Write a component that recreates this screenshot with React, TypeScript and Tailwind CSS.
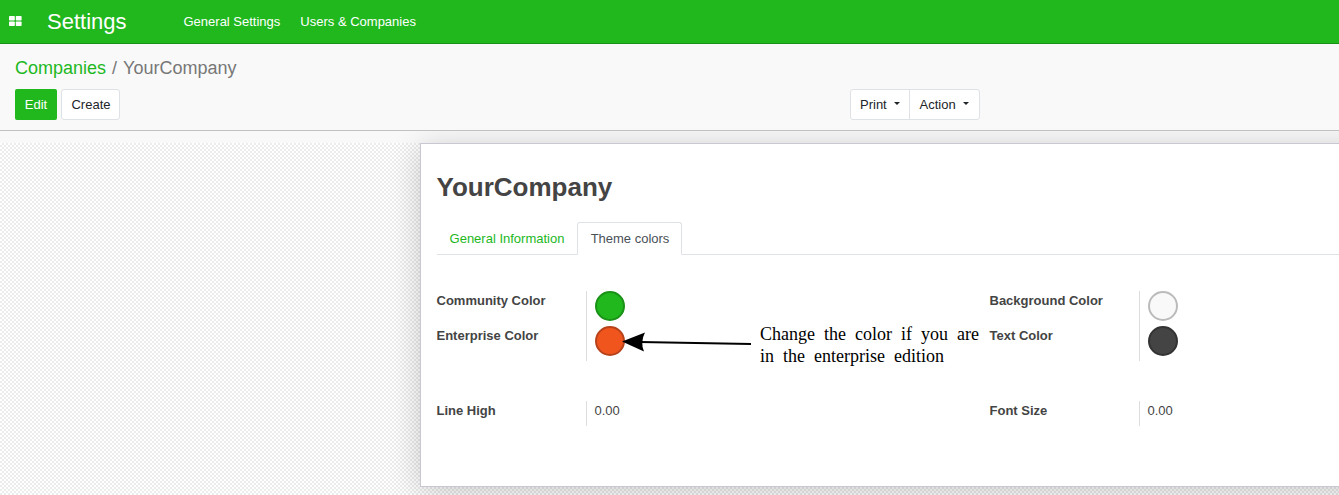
import React from "react";

const checker =
  "bg-[conic-gradient(#ececec_25%,#ffffff_0_50%,#ececec_0_75%,#ffffff_0)] bg-[length:4px_4px]";

function Caret() {
  return (
    <svg className="mt-[-2px] ml-[7px]" width="6" height="3" viewBox="0 0 6 3">
      <path d="M0 0H6L3 3Z" fill="#212529" />
    </svg>
  );
}

function Swatch({ color }: { color: string }) {
  return <span className={`block h-[30px] w-[30px] rounded-full border-2 ${color}`} />;
}

function Field({ label, children }: { label: string; children: React.ReactNode }) {
  return (
    <div className="flex h-[35px]">
      <div className="w-[149.5px] shrink-0 pt-[2px] font-bold leading-[15px]">{label}</div>
      <div className="h-[35px] border-l border-[#dddddd] pl-2">{children}</div>
    </div>
  );
}

function NumberField({ label }: { label: string }) {
  return (
    <div className="flex h-[25px]">
      <div className="w-[149.5px] shrink-0 pt-[2px] font-bold leading-[15px]">{label}</div>
      <div className="border-l border-[#dddddd] pt-[2px] pl-[7.5px] leading-[15px]">0.00</div>
    </div>
  );
}

export default function App() {
  return (
    <div className="relative flex h-[495px] w-[1339px] flex-col overflow-hidden bg-[#f9f9f9] font-['Liberation_Sans',Arial,sans-serif] text-[13px] text-[#444444]">
      <nav className="flex h-11 shrink-0 items-center border-b border-[#1a9117] bg-[#21b81e] text-white">
        <svg className="mt-[-2px] ml-[9px] shrink-0" width="13" height="10" viewBox="0 0 13 10" fill="currentColor">
          <rect x="0" y="0" width="5.8" height="4.5" rx="0.7" />
          <rect x="6.8" y="0" width="5.8" height="4.5" rx="0.7" />
          <rect x="0" y="5.5" width="5.8" height="4.5" rx="0.7" />
          <rect x="6.8" y="5.5" width="5.8" height="4.5" rx="0.7" />
        </svg>
        <span className="ml-[25px] w-[136.5px] text-[22px]">Settings</span>
        <span>General Settings</span>
        <span className="ml-5">Users &amp; Companies</span>
      </nav>

      <header className="h-[87px] shrink-0 border-b border-[#c1c1c1] px-[15px] pt-[11px]">
        <div className="flex h-[27px] items-center text-[18px]">
          <span className="text-[#21b81e]">Companies</span>
          <span className="px-[6px] text-[#777777]">/</span>
          <span className="text-[#777777]">YourCompany</span>
        </div>
        <div className="mt-[7px] flex text-[#212529]">
          <button className="h-[31px] w-[42px] rounded-[2px] bg-[#21b81e] text-white">Edit</button>
          <button className="ml-1 h-[31px] w-[59px] rounded-[3px] border border-[#dee2e6] bg-white pl-px">Create</button>
          <div className="ml-[730px] flex h-[31px] rounded-[3px] border border-[#dee2e6] bg-white">
            <button className="flex w-[59px] items-center border-r border-[#dee2e6] pl-[9px]">Print<Caret /></button>
            <button className="flex w-[69px] items-center pl-[9.5px]">Action<Caret /></button>
          </div>
        </div>
      </header>

      <main className="flex-1 overflow-hidden pt-3">
        <div className={`h-[352px] pl-[420px] ${checker}`}>
          <section className="h-[344px] w-[1140px] border border-[#c8c8d3] bg-white pt-[28px] pr-4 pl-[15.5px] shadow-[0_5px_30px_rgba(0,0,0,0.2)]">
            <h1 className="h-[32px] text-[26px] leading-[31px] font-bold">YourCompany</h1>
            <div className="mt-[18px] flex h-[33px] border-b border-[#dee2e6]">
              <button className="w-[140.5px] pt-px pl-[0.5px] text-[#21b81e]">General Information</button>
              <button className="h-[33px] w-[105px] rounded-t-[3px] border border-b-white border-[#dee2e6] bg-white pt-px pl-px text-[#495057]">Theme colors</button>
            </div>
            <div className="mt-[36px] grid grid-cols-[553px_553px]">
              <div>
                <Field label="Community Color"><Swatch color="bg-[#21b81e] border-[#1a9117]" /></Field>
                <Field label="Enterprise Color"><Swatch color="bg-[#f0551e] border-[#b8431b]" /></Field>
              </div>
              <div>
                <Field label="Background Color"><Swatch color="bg-[#f9f9f9] border-[#bbbbbb]" /></Field>
                <Field label="Text Color"><Swatch color="bg-[#444444] border-[#333333]" /></Field>
              </div>
            </div>
            <div className="mt-[40px] grid grid-cols-[553px_553px]">
              <NumberField label="Line High" />
              <NumberField label="Font Size" />
            </div>
          </section>
        </div>
      </main>

      <svg className="absolute top-[328px] left-[618px]" width="136" height="28" viewBox="618 328 136 28">
        <path d="M640 342 751 344" stroke="#000000" strokeWidth="2" />
        <path d="M622 341.5 645 332.5Q640 342 644 351.5Z" fill="#000000" />
      </svg>
      <div className="absolute top-[323px] left-[760px] font-['Liberation_Serif',serif] text-[18px] leading-[22px] whitespace-nowrap text-black">
        <div className="[word-spacing:4.5px]">Change the color if you are</div>
        <div className="[word-spacing:4.5px]">in the enterprise edition</div>
      </div>
    </div>
  );
}
